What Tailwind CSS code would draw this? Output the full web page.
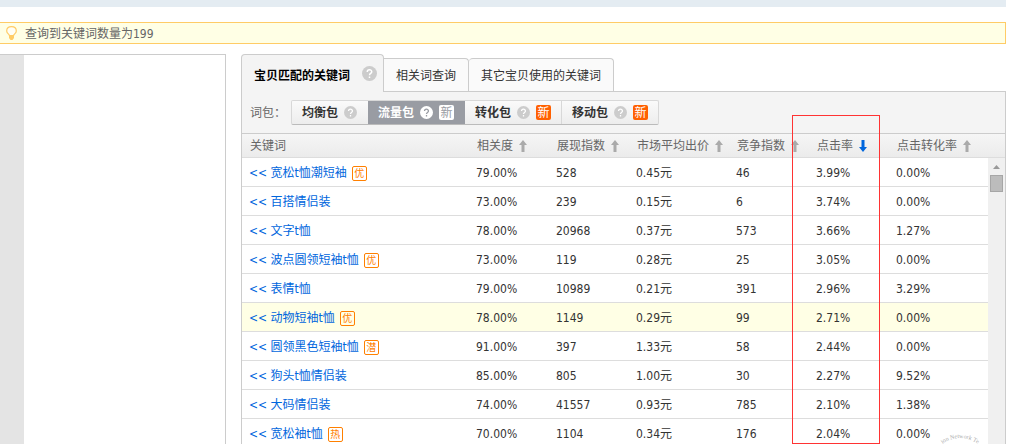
<!DOCTYPE html>
<html lang="zh-CN">
<head>
<meta charset="utf-8">
<title>关键词查询</title>
<script src="https://cdn.jsdelivr.net/npm/@tailwindcss/browser@4"></script>
</head>
<body class="relative h-screen overflow-hidden bg-white pr-[13px] font-['DejaVu_Sans_Condensed','Noto_Sans_CJK_SC',sans-serif] text-[12px] leading-4 text-[#333]">
<svg class="hidden">
  <symbol id="help" viewBox="0 0 16 16"><circle cx="8" cy="8" r="8" fill="currentColor"/><path d="M5.6 6.3C5.6 3.2 10.4 3.2 10.4 6.2C10.4 8 8 7.9 8 9.8M8 11.2V12.8" fill="none" stroke="var(--mark, #fff)" stroke-width="1.6"/></symbol>
  <symbol id="up" viewBox="0 0 8 12"><path d="M4 0L8 5H5.5V12H2.5V5H0Z" fill="currentColor"/></symbol>
  <symbol id="down" viewBox="0 0 8 12"><path d="M4 12L8 7H5.5V0H2.5V7H0Z" fill="currentColor"/></symbol>
</svg>

<div class="h-[7px] bg-[#e4ecf2]"></div>
<div class="mt-[15px] flex h-[22px] items-center gap-2 border border-l-0 border-[#ffcc66] bg-[#ffffe5] pl-[6px] text-[#666]">
  <svg class="h-[14px] w-[11px]" viewBox="0 0 11 14"><path d="M3.4 9.5C3.2 8 .7 7.4.7 4.9C.7 2.4 2.7.7 5.5.7S10.3 2.4 10.3 4.9C10.3 7.4 7.8 8 7.6 9.5Z" fill="#fffef5" stroke="#fc6" stroke-width="1.2"/><path d="M3 9H8V12L6.5 14H4.5L3 12Z" fill="#fc6"/></svg>
  <p class="pt-[2px]">查询到关键词数量为199</p>
</div>

<div class="mt-[10px] flex items-stretch">
  <aside class="flex w-[226px] shrink-0 border-t border-r border-[#ccc]"><div class="w-6 bg-[#e4e4e4]"></div></aside>
  <main class="ml-[15px] min-w-0 flex-1">
    <div class="flex items-end" role="tablist">
      <button class="z-10 -mb-px flex h-[38px] w-[143px] items-center rounded-t border border-b-0 border-[#ccc] bg-[#f4f4f4] pl-3 pt-1 font-bold text-black" role="tab" aria-selected="true">宝贝匹配的关键词<svg class="mb-1 ml-3 size-[15px] text-[#ccc]"><use href="#help"/></svg></button>
      <button class="h-[33px] w-[85px] rounded-tr border-t border-r border-[#ccc] bg-[#fafafa] pt-[2px] text-center" role="tab">相关词查询</button>
      <button class="h-[33px] w-[145px] rounded-t border-t border-r border-[#ccc] bg-[#fafafa] pt-[2px] text-center" role="tab">其它宝贝使用的关键词</button>
    </div>
    <section class="border border-[#ccc]">
      <div class="flex h-[41px] items-center bg-[#f4f4f4] pl-2">
        <span class="w-[41px] text-[#666]">词包：</span>
        <div class="flex h-[25px] rounded-xs border border-[#d8d8d8] border-b-[#bbb] bg-linear-to-b from-[#fafafa] to-[#ededed] font-bold">
          <button class="flex w-[76px] items-center gap-[6px] pl-[10px]">均衡包<svg class="size-[13px] text-[#ccc]"><use href="#help"/></svg></button>
          <button class="flex w-[97px] items-center gap-[6px] bg-[#999ca3] pl-[10px] text-white">流量包<svg class="size-[13px] [--mark:#999ca3]"><use href="#help"/></svg><span class="size-[15px] rounded-xs bg-white text-center font-normal leading-4 text-[#999ca3]">新</span></button>
          <button class="flex w-[97px] items-center gap-[6px] border-r border-[#d8d8d8] pl-[10px]">转化包<svg class="size-[13px] text-[#ccc]"><use href="#help"/></svg><span class="size-[15px] rounded-xs bg-[#ff6000] text-center font-normal leading-4 text-white">新</span></button>
          <button class="flex w-[96px] items-center gap-[6px] pl-[10px]">移动包<svg class="size-[13px] text-[#ccc]"><use href="#help"/></svg><span class="size-[15px] rounded-xs bg-[#ff6000] text-center font-normal leading-4 text-white">新</span></button>
        </div>
      </div>
      <table class="w-full table-fixed border-separate border-spacing-0 text-left whitespace-nowrap">
        <colgroup><col><col class="w-20"><col class="w-20"><col class="w-[100px]"><col class="w-20"><col class="w-20"><col class="w-[99px]"><col class="w-[17px]"></colgroup>
        <thead class="bg-linear-to-b from-[#f6f6f6] to-[#ebebeb] text-[#666]">
          <tr class="h-[25px] *:border-y *:border-t-[#ccc] *:border-b-[#ddd] *:p-0 *:pl-2 *:font-normal">
            <th>关键词</th>
            <th><button class="flex items-center gap-[6px]">相关度<svg class="h-3 w-2 text-[#aaa]"><use href="#up"/></svg></button></th>
            <th><button class="flex items-center gap-[6px]">展现指数<svg class="h-3 w-2 text-[#aaa]"><use href="#up"/></svg></button></th>
            <th><button class="flex items-center gap-[6px]">市场平均出价<svg class="h-3 w-2 text-[#aaa]"><use href="#up"/></svg></button></th>
            <th><button class="flex items-center gap-[6px]">竞争指数<svg class="h-3 w-2 text-[#aaa]"><use href="#up"/></svg></button></th>
            <th><button class="flex items-center gap-[6px]">点击率<svg class="h-3 w-2 text-[#0066dd]"><use href="#down"/></svg></button></th>
            <th colspan="2"><button class="flex items-center gap-[6px]">点击转化率<svg class="h-3 w-2 text-[#aaa]"><use href="#up"/></svg></button></th>
          </tr>
        </thead>
        <tbody id="rows"></tbody>
      </table>
    </section>
  </main>
</div>

<div class="pointer-events-none absolute top-[115px] right-[139px] h-[329px] w-[88px] border border-[#f33]"></div>
<svg class="pointer-events-none absolute right-[32px] bottom-0 h-[14px] w-[54px] fill-[#aaa] font-['Liberation_Serif',serif] text-[6px]" viewBox="0 0 54 14"><path id="arc" d="M-3 38A30 30 0 0 1 57 38" fill="none"/><text text-anchor="middle"><textPath href="#arc" startOffset="50%">ion Network Te</textPath></text></svg>

<script>
const data = [
  ['宽松t恤潮短袖','优','79.00%','528','0.45元','46','3.99%','0.00%'],
  ['百搭情侣装','','73.00%','239','0.15元','6','3.74%','0.00%'],
  ['文字t恤','','78.00%','20968','0.37元','573','3.66%','1.27%'],
  ['波点圆领短袖t恤','优','73.00%','119','0.28元','25','3.05%','0.00%'],
  ['表情t恤','','79.00%','10989','0.21元','391','2.96%','3.29%'],
  ['动物短袖t恤','优','78.00%','1149','0.29元','99','2.71%','0.00%'],
  ['圆领黑色短袖t恤','潜','91.00%','397','1.33元','58','2.44%','0.00%'],
  ['狗头t恤情侣装','','85.00%','805','1.00元','30','2.27%','9.52%'],
  ['大码情侣装','','74.00%','41557','0.93元','785','2.10%','1.38%'],
  ['宽松袖t恤','热','70.00%','1104','0.34元','176','2.04%','0.00%']
];
const scroller = '<td rowspan="10" class="bg-[#f0f0f0] p-0 align-top"><div class="flex flex-col items-center gap-[6px] pt-[7px]"><svg class="h-1 w-[7px]" viewBox="0 0 7 4"><path d="M3.5 0L7 4H0Z" fill="#999"/></svg><div class="h-[17px] w-[13px] border border-[#a6a6a6] bg-[#bcbcbc]"></div></div></td>';
document.getElementById('rows').innerHTML = data.map(([name, tag, ...values], i) =>
  `<tr class="h-[29px] ${i === 5 ? 'bg-[#ffffe5]' : 'bg-white'}">
    <td class="border-b border-[#ddd] p-0 pt-[2px] pl-[7px]"><div class="flex items-center gap-[5px]"><a href="#" class="text-[#0066dd]">&lt;&lt; ${name}</a>${tag ? `<span class="size-[15px] rounded-xs border border-[#ff8000] text-center text-[10px] leading-[13px] text-[#ff8000]">${tag}</span>` : ''}</div></td>
    ${values.map(v => `<td class="border-b border-[#ddd] p-0 pt-[2px] pl-[7px]">${v}</td>`).join('')}
    ${i === 0 ? scroller : ''}
  </tr>`).join('');
</script>
</body>
</html>
